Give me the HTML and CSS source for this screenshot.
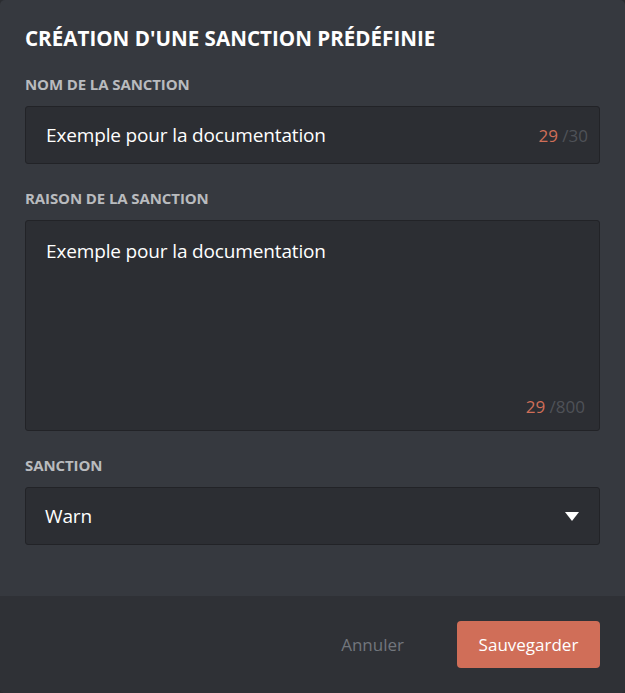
FILE: index.html
```html
<!DOCTYPE html>
<html lang="fr">
<head>
<meta charset="utf-8">
<link rel="stylesheet" href="styles.css">
</head>
<body>
<div class="modal">
  <div class="content">
    <h1 class="title">Création d'une sanction prédéfinie</h1>
    <div class="field">
      <div class="label">Nom de la sanction</div>
      <div class="input">
        <span class="value">Exemple pour la documentation</span>
        <span class="count"><span class="cur">29</span> <span class="max">/30</span></span>
      </div>
    </div>
    <div class="field">
      <div class="label">Raison de la sanction</div>
      <div class="textarea">
        <span class="value">Exemple pour la documentation</span>
        <span class="count"><span class="cur">29</span> <span class="max">/800</span></span>
      </div>
    </div>
    <div class="field">
      <div class="label">Sanction</div>
      <div class="select">
        <span class="value">Warn</span>
        <svg class="caret" width="14" height="9" viewBox="0 0 14 9"><path d="M0 0 H14 L7 9 Z" fill="#ffffff"/></svg>
      </div>
    </div>
  </div>
  <div class="footer">
    <button class="cancel">Annuler</button>
    <button class="save">Sauvegarder</button>
  </div>
</div>
</body>
</html>
```
FILE: styles.css
```css
html, body {
  margin: 0;
  padding: 0;
  background: #2b2d31;
}
body {
  font-family: "Open Sans", "Noto Sans", sans-serif;
}
.modal {
  width: 625px;
  height: 693px;
  background: #36393f;
  border-radius: 5px;
  overflow: hidden;
  display: flex;
  flex-direction: column;
}
.content {
  flex: 1;
  padding: 24px 25px 0 25px;
}
.title {
  margin: 0 0 22px 0;
  font-size: 20.6px;
  line-height: 28px;
  font-weight: 700;
  text-transform: uppercase;
  color: #ffffff;
}
.field {
  margin-bottom: 24px;
}
.label {
  font-size: 15px;
  line-height: 20px;
  font-weight: 700;
  text-transform: uppercase;
  color: #b9bbbe;
  letter-spacing: -0.1px;
  margin-bottom: 12px;
}
.input, .textarea, .select {
  box-sizing: border-box;
  background: #2c2e33;
  border: 1px solid #222327;
  border-radius: 3px;
  color: #ffffff;
  font-size: 19px;
  letter-spacing: -0.15px;
}
.input {
  height: 58px;
  display: flex;
  align-items: center;
  justify-content: space-between;
  padding: 0 11px 0 20px;
}
.textarea {
  height: 211px;
  display: flex;
  flex-direction: column;
  justify-content: space-between;
  padding: 17px 14px 12px 20px;
}
.textarea .count {
  align-self: flex-end;
}
.select {
  height: 58px;
  display: flex;
  align-items: center;
  justify-content: space-between;
  padding: 0 20px 0 19px;
}
.count {
  font-size: 17px;
  letter-spacing: 0;
}
.cur {
  color: #d06e58;
}
.max {
  color: #4f5258;
}
.footer {
  height: 97px;
  background: #2f3136;
  display: flex;
  align-items: center;
  justify-content: flex-end;
  gap: 33px;
  padding: 0 25px 0 0;
  box-sizing: border-box;
}
button {
  font-family: inherit;
  border: none;
  cursor: pointer;
}
.cancel {
  background: transparent;
  color: #72767d;
  font-size: 17px;
  padding: 0 20px;
}
.save {
  background: #d06e58;
  color: #ffffff;
  font-size: 17px;
  border-radius: 4px;
  width: 143px;
  height: 47px;
}
```
